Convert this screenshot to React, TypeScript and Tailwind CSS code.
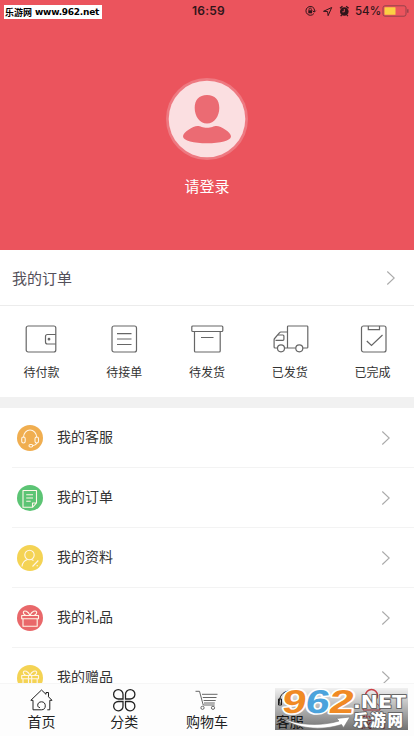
import type { ReactNode } from 'react'

const orders: { label: string; icon: ReactNode }[] = [
  {
    label: '待付款',
    icon: (
      <>
        <rect x="3.2" y="2" width="29.6" height="26" rx="2" />
        <path d="M32.8 10.5h-8.3a2 2 0 0 0-2 2V18a2 2 0 0 0 2 2h8.3" />
        <circle cx="26" cy="15.2" r="0.8" fill="#555" />
      </>
    ),
  },
  {
    label: '待接单',
    icon: (
      <>
        <rect x="6" y="2" width="24.5" height="26" rx="2" />
        <path d="M11 9.7h14.5M11 15h14.5M11 20.5h14.5" />
      </>
    ),
  },
  {
    label: '待发货',
    icon: (
      <>
        <rect x="2.8" y="2" width="31" height="5.5" rx="1" />
        <path d="M5.5 7.5V27a1 1 0 0 0 1 1h23.7a1 1 0 0 0 1-1V7.5M12 13.5h12.5" />
      </>
    ),
  },
  {
    label: '已发货',
    icon: (
      <>
        <path d="M12.5 24h11.3M15.5 24V2.8a.8.8 0 0 1 .8-.8h18.7a.8.8 0 0 1 .8.8v20.4a.8.8 0 0 1-.8.8h-4.2M15.500 8H8.800a1.500 1.500 0 0 0-1.200.600L2.600 14.500a2 2 0 0 0-.5 1.300V23a1 1 0 0 0 1 1h2.400" />
        <path d="M3.500 16.300h7.400a1 1 0 0 0 1-1v-3.300a1 1 0 0 0-1-1H6" />
        <circle cx="9" cy="24.3" r="3.5" />
        <circle cx="27.3" cy="24.3" r="3.5" />
      </>
    ),
  },
  {
    label: '已完成',
    icon: (
      <>
        <rect x="6.5" y="2" width="24.5" height="26" rx="2" />
        <path d="M13.300 2v3.700h11.200V2M11.800 17l4.700 4.500L27.500 11" />
      </>
    ),
  },
]

const menu: { label: string; bg: string; icon: ReactNode }[] = [
  {
    label: '我的客服',
    bg: 'bg-[#f0ae50]',
    icon: (
      <>
        <path d="M6.500 12.500C6.500 8 9.500 5 13 5s6.700 3 6.700 7.500M20 18c-.8 1.700-2.500 2.500-4.500 2.700" />
        <rect x="4.7" y="12" width="3.5" height="6" rx="1.7" />
        <rect x="18" y="12" width="3.5" height="6" rx="1.7" />
        <rect x="12" y="19.5" width="3.7" height="2.5" rx="1.2" />
      </>
    ),
  },
  {
    label: '我的订单',
    bg: 'bg-[#5cc474]',
    icon: (
      <>
        <path d="M6 5.500h13.500V18l-4 4.300H6zM19.500 18h-4v4.300" />
        <path d="M9.200 9.700h6.800M9.200 13h6.800M9.200 16.300h4.500" />
      </>
    ),
  },
  {
    label: '我的资料',
    bg: 'bg-[#f4d354]',
    icon: (
      <>
        <circle cx="12.5" cy="10" r="4.7" />
        <path d="M5 21.500c.4-4 2.700-6.200 5.500-7M14.500 14.500l2 .9M15.500 21.500l5.800-6M19.500 20.800h1.500" />
      </>
    ),
  },
  {
    label: '我的礼品',
    bg: 'bg-[#e9686a]',
    icon: (
      <>
        <path d="M4.700 10.500h16.800v3.200H4.700zM6 13.700v7.500h14.200v-7.500" />
        <path d="M13 10.300C11 6.200 7.500 5 6.500 6.800c-.7 1.500.8 3 2.200 3.500M13 10.300c2-4.100 5.500-5.300 6.500-3.500.7 1.500-.8 3-2.200 3.500" />
      </>
    ),
  },
  {
    label: '我的赠品',
    bg: 'bg-[#f4d354]',
    icon: (
      <>
        <path d="M4.700 10.500h16.800v3.200H4.700zM6 13.700v7.500h14.200v-7.500M11.500 10.500v10.700M14.700 10.500v10.700" />
        <path d="M13 10.300C11 6.200 7.500 5 6.500 6.800c-.7 1.500.8 3 2.200 3.500M13 10.300c2-4.100 5.500-5.300 6.500-3.500.7 1.500-.8 3-2.200 3.500" />
      </>
    ),
  },
]

const tabs: { label: string; color: string; icon: ReactNode }[] = [
  {
    label: '首页',
    color: 'text-[#222]',
    icon: (
      <path d="M4 12.300H1.800L12.500 2l4.500 4.300V4.500h2.500v4.300l3.500 3.500h-2.200v9.500h-2.500M4 12.300v9.500h8.500c2.500 0 3.800-1.500 3.800-4 0-2.300-1.300-4-3.800-4s-3.800 1.500-3.800 3.500c0 1.500 1 2.300 2.300 2.300" />
    ),
  },
  {
    label: '分类',
    color: 'text-[#222]',
    icon: (
      <g strokeWidth="1.3">
        <path d="M11 11H6.500A4.700 4.700 0 1 1 11 6.300zM13.500 11V6.300A4.700 4.700 0 1 1 18 11zM11 13.500v4.200a4.700 4.700 0 1 1-4.500-4.200zM13.500 13.500H18a4.700 4.700 0 1 1-4.500 4.200z" />
      </g>
    ),
  },
  {
    label: '购物车',
    color: 'text-[#222]',
    icon: (
      <g stroke="#666">
        <path d="M1.500 3.300h4L9.200 17h11.500M8 6.300h15.500M8.800 9.500h13.700M9.600 12.500h12.100M10 15h10.800" />
        <circle cx="8.5" cy="19.8" r="1.6" />
        <circle cx="19" cy="19.8" r="1.6" />
      </g>
    ),
  },
  {
    label: '客服',
    color: 'text-[#222]',
    icon: <path d="M3 16C1 9 6 3 12.500 3S24 9 22 16M1.500 11v6h3v-6zM20.500 11v6h3v-6zM20 18c-1 2-3 3-6 3" />,
  },
  {
    label: '我的',
    color: 'text-[#d9444c]',
    icon: (
      <>
        <circle cx="11.5" cy="7.5" r="6" strokeWidth="1.5" />
        <path d="M3 22c0-5 3.500-8 8.500-8s8.500 3 8.500 8z" />
      </>
    ),
  },
]

function Chevron() {
  return (
    <svg className="h-4 w-[10px]" viewBox="0 0 10 16" fill="none" stroke="#aaa" strokeWidth="1.1">
      <path d="M1.300 1.500 8.200 8l-6.900 6.500" />
    </svg>
  )
}

function StatusBar() {
  return (
    <div className="flex h-[21px] items-center text-[#30151a]">
      <div className="mt-[3px] ml-1 flex h-[14px] w-[98px] shrink-0 items-center bg-white pl-px text-[9px] leading-none font-bold whitespace-nowrap text-black">
        <span>乐游网</span>
        <span className="ml-[3px] font-['DejaVu_Sans'] text-[9px] tracking-[-0.25px]">www.962.net</span>
      </div>
      <span className="ml-[90px] w-[36px] font-['Inter'] text-[12px] font-semibold tracking-[0.2px]">16:59</span>
      <svg className="ml-[77px] h-[14px] w-[46px] shrink-0" viewBox="0 0 46 14" fill="none" stroke="currentColor">
        <path d="M8.900 9.500A4.400 4.400 0 1 1 9 4.400M9.200 7.900A4.400 4.400 0 0 0 9 4.400M7.600 6.800l1.700 1.300 1.500-1.500" />
        <rect x="3.3" y="6.3" width="3.8" height="3" fill="currentColor" stroke="none" />
        <path d="M4 6.500V5.300a1.200 1.200 0 0 1 2.400 0v1.200" strokeWidth=".8" />
        <path d="m18.500 7.300 8.200-3.800-3.600 8.200-.5-4.200z" />
        <circle cx="39.3" cy="7.5" r="4.3" fill="currentColor" stroke="none" />
        <path d="m35 4.300 2.500-2M43.600 4.300l-2.500-2M36.700 11l-1 1.200M41.900 11l1 1.200" strokeWidth="1.3" />
        <path d="M39.300 5v2.800h-2" stroke="#eb545d" strokeWidth=".9" />
      </svg>
      <span className="mt-[2px] ml-[4px] w-[25px] font-['Inter'] text-[11.5px] font-medium whitespace-nowrap">54%</span>
      <svg className="ml-[2px] h-[12px] w-[27px] shrink-0" viewBox="0 0 27 12" fill="none">
        <rect x="1" y=".8" width="23" height="10.4" rx="2" stroke="#96414a" />
        <rect x="2.5" y="2.3" width="11" height="7.4" rx=".5" fill="#fbd044" />
        <path d="M25.800 4.300v3.400" stroke="#96414a" strokeWidth="1.4" />
      </svg>
    </div>
  )
}

// site badge laid over the right end of the tab bar
function SiteBadge() {
  return (
    <div className="absolute bottom-[6px] left-[275px] h-[42px] w-[133px] bg-linear-to-b from-black/5 to-black/55">
      <svg className="h-full w-full overflow-visible" viewBox="0 0 133 42">
        <path
          d="M7 29.500c14 8 39 9 57 3.500l-2.500-2.500L75 29l-6.500 10.500-2-3C47 43 21 41 7 29.500z"
          fill="#fff"
          stroke="#777"
          strokeWidth=".6"
        />
        <g
          transform="translate(3.5 0) skewX(-8)"
          fontFamily="Liberation Sans"
          fontWeight="bold"
          fontSize="33"
          stroke="#fff"
          strokeWidth="3"
          strokeLinejoin="round"
          paintOrder="stroke"
        >
          <text x="6" y="25" fill="#f08a24" textLength="24" lengthAdjust="spacingAndGlyphs">9</text>
          <text x="29.5" y="25" fill="#4ba3dc" textLength="24" lengthAdjust="spacingAndGlyphs">6</text>
          <text x="53" y="25" fill="#f08a24" textLength="25" lengthAdjust="spacingAndGlyphs">2</text>
        </g>
        <g fill="#fff" stroke="#666" strokeWidth="1.8" strokeLinejoin="round" paintOrder="stroke" fontWeight="bold">
          <text x="78" y="20" fontFamily="DejaVu Sans" fontSize="18" textLength="53" lengthAdjust="spacingAndGlyphs">.NET</text>
          <text x="78" y="37.5" fontFamily="Noto Sans CJK SC" fontWeight="900" fontSize="15.5" textLength="50">乐游网</text>
        </g>
      </svg>
    </div>
  )
}

export default function App() {
  return (
    <div className="relative flex h-[736px] w-[414px] flex-col overflow-hidden bg-white font-['Noto_Sans_CJK_SC',sans-serif] text-[#333]">
      <header className="h-[250px] shrink-0 bg-[#eb545d]">
        <StatusBar />
        <div className="mt-[57px] flex flex-col items-center">
          <svg className="h-[82px] w-[82px]" viewBox="0 0 82 82">
            <circle cx="41" cy="41" r="41" fill="#ee7981" />
            <circle cx="41" cy="41" r="38.3" fill="#fbdfe1" />
            <path
              d="M41 17c8 0 12.300 5 12.300 13S48.500 45.500 41 45.500 28.700 38 28.700 30 33 17 41 17zM31.500 48c3 0 5 1.800 9.500 1.800s6.500-1.800 9.500-1.800c4.500 0 14.500 6.500 14.500 10.300C65 63 54 65.300 41 65.300S17 63 17 58.300C17 54.500 27 48 31.500 48z"
              fill="#eb6b73"
            />
          </svg>
          <span className="mt-[15px] text-[15px] leading-[22px] text-white">请登录</span>
        </div>
      </header>

      <div className="flex h-14 shrink-0 items-center justify-between border-b border-[#ececec] pr-[18px] pl-[12px]">
        <span className="mt-[2px] text-[15px] text-[#54505a]">我的订单</span>
        <Chevron />
      </div>

      <div className="grid h-[91px] shrink-0 grid-cols-5 pt-[18px]">
        {orders.map((o) => (
          <div key={o.label} className="flex flex-col items-center">
            <svg className="h-[30px] w-[36px] overflow-visible" viewBox="0 0 36 30" fill="none" stroke="#666" strokeWidth="1.2">
              {o.icon}
            </svg>
            <span className="mt-[9px] text-[12px] leading-[18px]">{o.label}</span>
          </div>
        ))}
      </div>

      <div className="h-[11px] shrink-0 bg-[#f1f1f1]" />

      <div className="min-h-0 flex-1 overflow-hidden">
        {menu.map((m) => (
          <div key={m.label} className="ml-[12px] flex h-[60px] items-center border-b border-[#f3f3f3] pr-[23px] pl-[5px]">
            <div className={`h-[26px] w-[26px] rounded-full ${m.bg}`}>
              <svg className="h-[26px] w-[26px]" viewBox="0 0 26 26" fill="none" stroke="#fff6e8" strokeWidth="1.1" strokeLinejoin="round">
                {m.icon}
              </svg>
            </div>
            <span className="mb-[2px] ml-[14px] flex-1 text-[14px]">{m.label}</span>
            <Chevron />
          </div>
        ))}
      </div>

      <nav className="grid h-[53px] shrink-0 grid-cols-5 border-t border-[#f6f6f6] bg-[#fdfdfd] pt-[4px]">
        {tabs.map((t) => (
          <div key={t.label} className={`flex flex-col items-center ${t.color}`}>
            <svg className="h-6 w-[25px]" viewBox="0 0 25 24" fill="none" stroke="currentColor" strokeWidth="1">
              {t.icon}
            </svg>
            <span className="text-[14px] leading-[18px]">{t.label}</span>
          </div>
        ))}
      </nav>

      <SiteBadge />
    </div>
  )
}
